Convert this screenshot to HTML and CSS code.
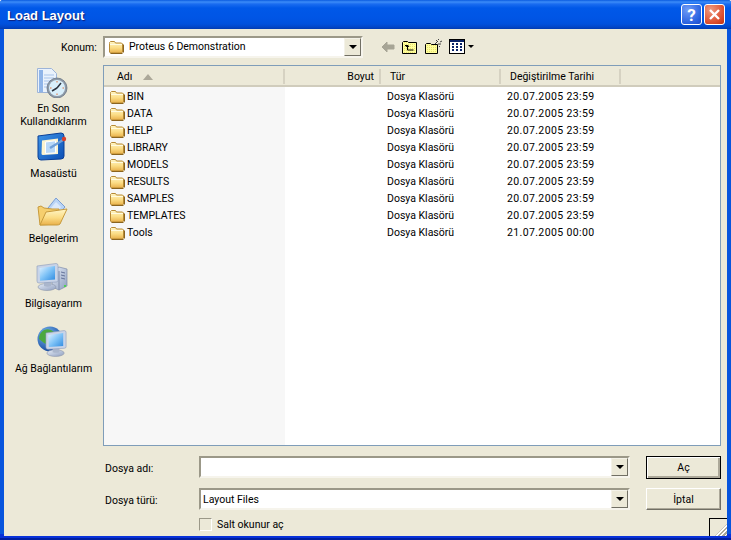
FILE: index.html
```html
<!DOCTYPE html>
<html>

	<head>
		<meta charset="UTF-8">
		<title>Load Layout</title>
		<link rel="stylesheet" href="styles.css">
	</head>

	<body>
		<svg class="sprite" width="0" height="0">
			<defs>
				<pattern id="dither" width="2" height="2" patternUnits="userSpaceOnUse">
					<rect width="2" height="2" fill="#ffff9c" />
					<rect width="1" height="1" fill="#e8e070" />
				</pattern>
				<linearGradient id="fold" x1="0" y1="0" x2="0" y2="1">
					<stop offset="0" stop-color="#fff6c8" />
					<stop offset="0.55" stop-color="#fbdc84" />
					<stop offset="1" stop-color="#e9b04a" />
				</linearGradient>
				<linearGradient id="screen" x1="0" y1="0" x2="1" y2="1">
					<stop offset="0" stop-color="#e4f3ff" />
					<stop offset="0.5" stop-color="#7fc3f7" />
					<stop offset="1" stop-color="#2f8be0" />
				</linearGradient>
				<linearGradient id="metal" x1="0" y1="0" x2="1" y2="1">
					<stop offset="0" stop-color="#e6edf7" />
					<stop offset="1" stop-color="#8f9fc0" />
				</linearGradient>
				<linearGradient id="blue" x1="0" y1="0" x2="1" y2="1">
					<stop offset="0" stop-color="#3f95e8" />
					<stop offset="1" stop-color="#0b4fb4" />
				</linearGradient>
				<radialGradient id="globe" cx="0.35" cy="0.3" r="0.8">
					<stop offset="0" stop-color="#7ab8f0" />
					<stop offset="1" stop-color="#0c3f98" />
				</radialGradient>
				<symbol id="folder" viewBox="0 0 16 16">
					<path d="M1.5 4.5v-1l1-1h4l1 1.5h6l1 1v8l-1 1h-11l-1-1z" fill="url(#fold)" stroke="#b78a35" />
					<path d="M2 5.5h12" stroke="#fffbe0" />
					<path d="M2.5 14.5h12M15.5 5.5v8" stroke="#8a6420" />
				</symbol>
				<symbol id="monitor" viewBox="0 0 24 28">
					<ellipse cx="11" cy="24" rx="9" ry="3.5" fill="url(#metal)" stroke="#8a93a8" stroke-width="0.6" />
					<path d="M8 18h7v5q-3.500 1.500-7 0z" fill="#aab6cc" />
					<path d="M1 3l19-2.500q2 0 2 2v15q0 1.500-2 1.500l-17 1q-2 0-2-2z" fill="#c9d4e8" stroke="#8b9ab8" stroke-width="0.6" />
					<path d="M3.500 5l15.500-2v13.500l-15 1.200z" fill="url(#screen)" />
				</symbol>
			</defs>
		</svg>

		<div class="window">
			<div class="titlebar">
				<span class="title">Load Layout</span>
				<a class="capbtn help" href="javascript:;">?</a>
				<a class="capbtn close" href="javascript:;">
					<svg width="13" height="13" viewBox="0 0 13 13"><path d="M2 2l9 9M11 2l-9 9" stroke="#fff" stroke-width="2.400" /></svg>
				</a>
			</div>

			<div class="content">
				<ul class="places">
					<li>
						<svg class="place-icon" viewBox="0 0 32 32">
							<path d="M1.500 2.500h14l5 5v19h-19z" fill="#eaf2fc" stroke="#9db4d8" />
							<path d="M3 4h4v22H3z" fill="#8fb4e8" />
							<path d="M8 9h10M8 12h10M8 15h8M8 18h6M8 21h4" stroke="#a9c4ea" />
							<circle cx="21" cy="22" r="10" fill="#8e9aa8" />
							<circle cx="21" cy="22" r="8" fill="#d8effb" />
							<circle cx="21" cy="22" r="10" fill="none" stroke="#5e6b7c" stroke-width="0.700" />
							<path d="M21 22l-5 3M21 22l4-5" stroke="#2d3440" stroke-width="1.500" />
							<path d="M21 15v1.500M28 22h-1.500M21 29v-1.500M14 22h1.500" stroke="#e0703a" />
						</svg>
						<span>En Son<br>Kullandıklarım</span>
					</li>
					<li>
						<svg class="place-icon" viewBox="0 0 32 32">
							<path d="M2 5l23-3q3 0 3 3v20q0 3-3 3l-20 1q-3 0-3-3z" fill="url(#blue)" stroke="#0a3f96" />
							<path d="M6 9.500l16-2v15.500l-15 1q-1.500 0-1.500-1.500z" fill="#fbf3cf" />
							<path d="M9.500 11l10-1.200v12l-10 .700z" fill="#b8d8f8" stroke="#fff" />
							<path d="M14 17l13-8" stroke="#6fa0d8" stroke-width="2.500" />
							<circle cx="28" cy="8" r="2.200" fill="#d8402c" />
						</svg>
						<span>Masaüstü</span>
					</li>
					<li>
						<svg class="place-icon" viewBox="0 0 32 32">
							<path d="M12 12l8-10 9 9-8 9z" fill="#b9d4f6" stroke="#7a9ed4" />
							<path d="M15 12l5-6 5 5-5 6z" fill="#dbe9fb" />
							<path d="M2 11l3-1 3 2 8 1 7 0-2 15-17 1z" fill="#f6cf6e" stroke="#c79a3c" />
							<path d="M4 29l6-13 21-3-7 15q-1 1-3 1z" fill="url(#fold)" stroke="#c79a3c" />
						</svg>
						<span>Belgelerim</span>
					</li>
					<li>
						<svg class="place-icon" viewBox="0 0 32 32">
							<path d="M16 9l7-3 8 2v17l-8 4-7-3z" fill="url(#metal)" stroke="#7f8cab" stroke-width="0.700" />
							<path d="M23 10v19" stroke="#7f8cab" />
							<path d="M25 11l4 1M25 14l4 1M25 17l4 1" stroke="#66749a" />
							<rect x="28" y="24" width="2" height="2" fill="#4fd04f" />
							<use href="#monitor" x="0" y="2" width="24" height="28" />
						</svg>
						<span>Bilgisayarım</span>
					</li>
					<li>
						<svg class="place-icon" viewBox="0 0 32 32">
							<circle cx="14" cy="13" r="12.500" fill="url(#globe)" />
							<path d="M8 4q6-2 10 2l-3 6-4 1 1 6-4-2-5-4q0-6 5-9zM18 17l3 2-2 4-3-2z" fill="#4ca83f" />
							<use href="#monitor" x="9" y="4" width="23" height="27" />
						</svg>
						<span>Ağ Bağlantılarım</span>
					</li>
				</ul>

				<div class="main">
					<div class="toolbar">
						<label class="look-label">Konum:</label>
						<div class="combo look-combo">
							<svg class="ficon" width="16" height="16"><use href="#folder" /></svg>
							<span class="combo-text">Proteus 6 Demonstration</span>
							<span class="drop"></span>
						</div>
						<div class="tools">
							<svg width="14" height="12" viewBox="0 0 14 12"><path d="M6 1v3h7v4H6v3L1 6z" fill="#a7a596" stroke="#a7a596" /></svg>
							<svg width="16" height="14" viewBox="0 0 16 14"><path d="M.5 13.500v-11l1-1h4l1 1h8v11z" fill="url(#dither)" stroke="#000" /><path d="M5 5.500l-2 0M5.500 5v5h6M4 7l1.500-2 1.500 2" fill="none" stroke="#000" /></svg>
							<svg width="17" height="15" viewBox="0 0 17 15"><path d="M.5 14.500v-9l1-1h4l1 1h6v9z" fill="url(#dither)" stroke="#000" /><path d="M10 5l3-3M13 5h3M13.500 1V0M15 3l2-1M11 1l1 1M14 7l1 1" stroke="#444" /></svg>
							<span class="views">
								<svg width="16" height="15" viewBox="0 0 16 15"><rect x=".5" y=".5" width="15" height="14" fill="#fff" stroke="#000" /><rect x="1" y="1" width="14" height="2" fill="#0a246a" /><path d="M3 5h2M7 5h2M11 5h2M3 8h2M7 8h2M11 8h2M3 11h2M7 11h2M11 11h2" stroke="#0a246a" stroke-width="2" /></svg>
								<i class="mini-arrow"></i>
							</span>
						</div>
					</div>

					<div class="list">
						<div class="list-head">
							<div class="col col-name">Adı<i class="sort"></i></div>
							<div class="col col-size">Boyut</div>
							<div class="col col-type">Tür</div>
							<div class="col col-date">Değiştirilme Tarihi</div>
						</div>
						<div class="list-body">
							<div class="row"><span class="name"><svg width="16" height="16"><use href="#folder" /></svg>BIN</span><span></span><span>Dosya Klasörü</span><span class="date">20.07.2005 23:59</span></div>
							<div class="row"><span class="name"><svg width="16" height="16"><use href="#folder" /></svg>DATA</span><span></span><span>Dosya Klasörü</span><span class="date">20.07.2005 23:59</span></div>
							<div class="row"><span class="name"><svg width="16" height="16"><use href="#folder" /></svg>HELP</span><span></span><span>Dosya Klasörü</span><span class="date">20.07.2005 23:59</span></div>
							<div class="row"><span class="name"><svg width="16" height="16"><use href="#folder" /></svg>LIBRARY</span><span></span><span>Dosya Klasörü</span><span class="date">20.07.2005 23:59</span></div>
							<div class="row"><span class="name"><svg width="16" height="16"><use href="#folder" /></svg>MODELS</span><span></span><span>Dosya Klasörü</span><span class="date">20.07.2005 23:59</span></div>
							<div class="row"><span class="name"><svg width="16" height="16"><use href="#folder" /></svg>RESULTS</span><span></span><span>Dosya Klasörü</span><span class="date">20.07.2005 23:59</span></div>
							<div class="row"><span class="name"><svg width="16" height="16"><use href="#folder" /></svg>SAMPLES</span><span></span><span>Dosya Klasörü</span><span class="date">20.07.2005 23:59</span></div>
							<div class="row"><span class="name"><svg width="16" height="16"><use href="#folder" /></svg>TEMPLATES</span><span></span><span>Dosya Klasörü</span><span class="date">20.07.2005 23:59</span></div>
							<div class="row"><span class="name"><svg width="16" height="16"><use href="#folder" /></svg>Tools</span><span></span><span>Dosya Klasörü</span><span class="date">21.07.2005 00:00</span></div>
						</div>
					</div>

					<div class="form">
						<label>Dosya adı:</label>
						<div class="combo"><span class="combo-text"></span><span class="drop"></span></div>
						<button class="btn btn-default">Aç</button>
						<label>Dosya türü:</label>
						<div class="combo"><span class="combo-text">Layout Files</span><span class="drop"></span></div>
						<button class="btn">İptal</button>
						<div class="readonly"><i class="check"></i>Salt okunur aç</div>
					</div>
				</div>
			</div>
			<i class="grip"></i>
		</div>
	</body>

</html>
```

FILE: styles.css
```css
* {
	margin: 0;
	padding: 0;
	box-sizing: border-box;
}

html,
body {
	width: 731px;
	height: 540px;
	overflow: hidden;
	background: #fff;
}

body {
	font-family: Roboto, "Liberation Sans", Arial, sans-serif;
	font-size: 10.5px;
	color: #000;
}

.sprite {
	position: absolute;
}

svg {
	display: block;
	flex: none;
}

.window {
	position: relative;
	width: 731px;
	height: 540px;
	display: flex;
	flex-direction: column;
	border-radius: 3px 3px 0 0;
	overflow: hidden;
	background: linear-gradient(to bottom, #0855dd 0, #0855dd 534px, #0831d9 534px, #0831d9 538px, #001ea0 538px);
}

.titlebar {
	height: 29px;
	flex: none;
	display: flex;
	align-items: center;
	padding: 0 6px 0 7px;
	gap: 2px;
	background: linear-gradient(to bottom, #0a5be0 0, #3c8cf8 2px, #1a6cf0 4px, #0058e8 8px, #0055e5 18px, #0050dc 24px, #0246c8 27px, #013bb0 29px);
}

.title {
	flex: 1;
	padding-top: 2px;
	font-family: "Liberation Sans", Arial, sans-serif;
	font-size: 13px;
	font-weight: 700;
	color: #fff;
	text-shadow: 1px 1px 1px #0f1f7a;
}

.capbtn {
	width: 21px;
	height: 21px;
	display: flex;
	align-items: center;
	justify-content: center;
	border: 1px solid #fff;
	border-radius: 3px;
	color: #fff;
	text-decoration: none;
	font-size: 17px;
	font-weight: 700;
}

.help {
	background: radial-gradient(circle at 30% 25%, #6f9cf6, #2a62e0 70%, #1c48c8);
}

.close {
	background: radial-gradient(circle at 30% 25%, #ee9a80, #dd5030 65%, #c03010);
}

.content {
	flex: 1;
	display: flex;
	margin: 0 4px 4px;
	background: #ece9d8;
	min-height: 0;
}

.places {
	width: 99px;
	flex: none;
	list-style: none;
	padding-top: 37px;
}

.places li {
	height: 65px;
	display: flex;
	flex-direction: column;
	align-items: center;
	text-align: center;
	line-height: 13px;
	gap: 4px;
}

.place-icon {
	width: 32px;
	height: 32px;
	margin-right: 3px;
}

.main {
	flex: 1;
	display: flex;
	flex-direction: column;
	padding-right: 6px;
	min-width: 0;
}

.toolbar {
	height: 36px;
	flex: none;
	display: flex;
	align-items: center;
	position: relative;
}

.look-label {
	position: absolute;
	left: -42px;
	top: 12px;
}

.combo {
	height: 22px;
	display: flex;
	align-items: center;
	background: #fff;
	border: 2px solid;
	border-color: #9b9888 #f6f4ec #f6f4ec #9b9888;
}

.look-combo {
	width: 260px;
	margin-top: -1px;
}

.ficon {
	margin-left: 3px;
}

.look-combo .combo-text {
	padding-left: 5px;
}

.combo-text {
	flex: 1;
	padding-left: 2px;
	white-space: nowrap;
}

.drop {
	width: 17px;
	height: 18px;
	flex: none;
	background: #ece9d8;
	border: 1px solid;
	border-color: #f4f2e8 #716f64 #716f64 #f4f2e8;
	position: relative;
}

.drop::after {
	content: "";
	position: absolute;
	left: 4px;
	top: 6px;
	border: 4px solid transparent;
	border-top: 4px solid #000;
	border-bottom: 0;
}

.tools {
	display: flex;
	align-items: center;
	gap: 7px;
	margin-left: 18px;
	margin-top: -1px;
}

.views {
	display: flex;
	align-items: center;
	gap: 3px;
}

.mini-arrow {
	border: 3px solid transparent;
	border-top: 3px solid #000;
	border-bottom: 0;
}

.list {
	flex: 1;
	display: flex;
	flex-direction: column;
	min-height: 0;
	border: 1px solid #7f9db9;
	background: #fff;
}

.list-head {
	height: 21px;
	flex: none;
	display: flex;
	background: #ece9d8;
	border-bottom: 2px solid #d0ccbc;
}

.col {
	height: 15px;
	margin-top: 3px;
	line-height: 15px;
	border-right: 2px solid #d6d2c2;
	white-space: nowrap;
}

.col-name {
	width: 181px;
	padding-left: 13px;
	display: flex;
	align-items: center;
}

.sort {
	margin-left: 11px;
	border: 5px solid transparent;
	border-bottom: 6px solid #aca899;
	border-top: 0;
}

.col-size {
	width: 96px;
	padding-right: 5px;
	text-align: right;
}

.col-type {
	width: 120px;
	padding-left: 9px;
}

.col-date {
	width: 120px;
	padding-left: 9px;
}

.list-body {
	flex: 1;
	padding-top: 1px;
	background: linear-gradient(to right, #f7f7f7 181px, #fff 181px);
}

.row {
	height: 17px;
	display: grid;
	grid-template-columns: 181px 96px 120px 120px;
	align-items: center;
}

.row span:nth-child(3),
.row span:nth-child(4) {
	padding-left: 6px;
}

.date {
	letter-spacing: 0.37px;
}

.name {
	display: flex;
	align-items: center;
	padding-left: 5px;
	gap: 2px;
}

.form {
	height: 90px;
	flex: none;
	display: grid;
	grid-template-columns: 96px 431px 16px 75px;
	grid-template-rows: 23px 22px 13px;
	row-gap: 9px;
	padding-top: 10px;
}

.form label {
	padding-left: 2px;
	align-self: center;
	margin-top: 2px;
}

.form .combo {
	grid-column: 2;
}

.btn {
	grid-column: 4;
	font: inherit;
	background: #ece9d8;
	border: 1px solid;
	border-color: #fff #716f64 #716f64 #fff;
	box-shadow: inset -1px -1px 0 #aca899;
}

.btn-default {
	border: 1px solid #000;
	box-shadow: inset 1px 1px 0 #fff, inset -2px -2px 0 #aca899;
}

.readonly {
	grid-column: 2;
	display: flex;
	align-items: center;
	gap: 5px;
	margin-top: -2px;
}

.check {
	width: 13px;
	height: 13px;
	background: #ece9d8;
	border: 1px solid;
	border-color: #9b9888 #fff #fff #9b9888;
}

.grip {
	position: absolute;
	right: 4px;
	bottom: 4px;
	width: 18px;
	height: 18px;
	border-top: 1px solid #000;
	border-left: 1px solid #000;
}

.grip::after {
	content: "";
	position: absolute;
	right: 0;
	bottom: 0;
	width: 12px;
	height: 12px;
	clip-path: polygon(100% 0, 100% 100%, 0 100%);
	background: repeating-linear-gradient(135deg, #fff 0, #fff 1px, #aca899 1px, #aca899 3px);
}
```
